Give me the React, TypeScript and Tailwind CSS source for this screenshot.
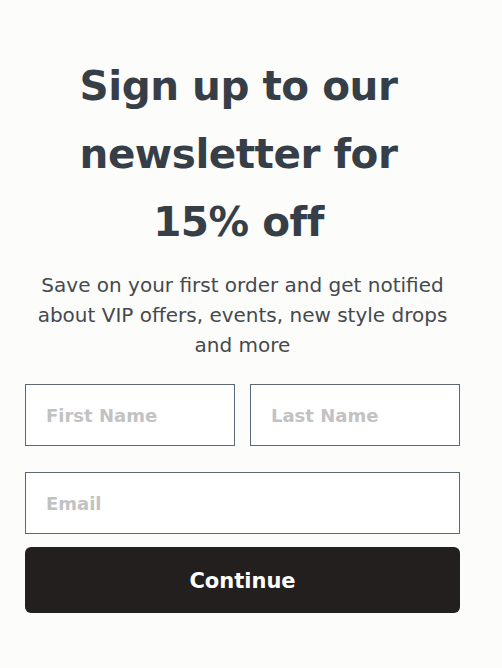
import React, { useState } from 'react';

const App: React.FC = () => {
  const [form, setForm] = useState({ firstName: '', lastName: '', email: '' });

  const handleChange = (e: React.ChangeEvent<HTMLInputElement>) => {
    const { name, value } = e.target;
    setForm(prev => ({ ...prev, [name]: value }));
  };

  return (
    <div className="min-h-[668px] w-full bg-[#fcfcfb] font-['DejaVu_Sans',sans-serif]">
      <div className="ml-[25px] flex w-[435px] flex-col items-center pt-[52px]">
        <h1 className="mr-[8px] w-[340px] text-center text-[40.5px] font-bold leading-[68px] tracking-[-0.5px] text-[#363e47]">
          Sign up to our newsletter for 15% off
        </h1>
        <p className="mt-[14px] w-[412px] text-center text-[20px] leading-[30px] text-[#45494e]">
          Save on your first order and get notified about VIP offers, events, new style drops and more
        </p>

        <form className="mt-[24px] flex w-full flex-col" onSubmit={e => e.preventDefault()}>
          <div className="flex gap-[15px]">
            <input
              name="firstName"
              value={form.firstName}
              onChange={handleChange}
              placeholder="First Name"
              className="h-[62px] w-[210px] border border-[#5c6873] bg-white px-[20px] text-[18px] font-bold text-[#333] outline-none placeholder:text-[#c2c2c2]"
            />
            <input
              name="lastName"
              value={form.lastName}
              onChange={handleChange}
              placeholder="Last Name"
              className="h-[62px] w-[210px] border border-[#5c6873] bg-white px-[20px] text-[18px] font-bold text-[#333] outline-none placeholder:text-[#c2c2c2]"
            />
          </div>
          <input
            name="email"
            value={form.email}
            onChange={handleChange}
            placeholder="Email"
            className="mt-[26px] h-[62px] w-full border border-[#5c6873] bg-white px-[20px] text-[18px] font-bold text-[#333] outline-none placeholder:text-[#c2c2c2]"
          />
          <button
            type="submit"
            className="mt-[13px] h-[66px] w-full rounded-[6px] bg-[#231f1f] pt-[3px] text-[21px] font-bold text-white"
          >
            Continue
          </button>
        </form>
      </div>
    </div>
  );
};

export default App;
